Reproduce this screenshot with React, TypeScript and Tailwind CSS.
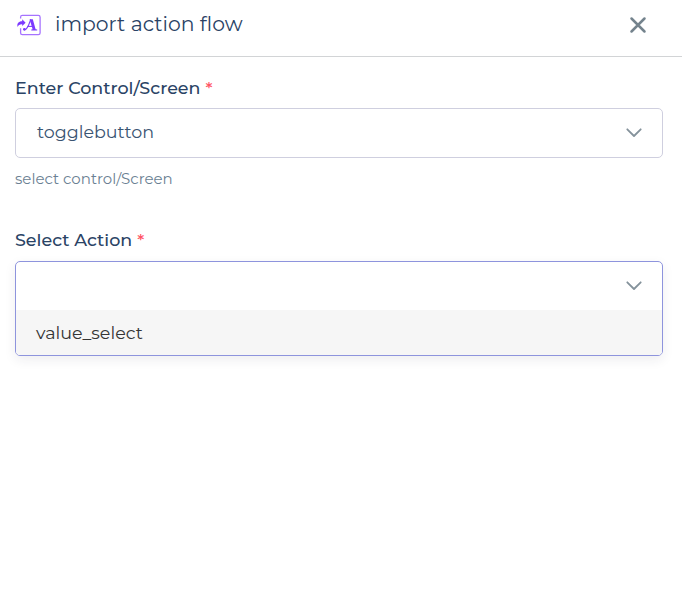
import { useState } from "react";

function ImportIcon() {
  return (
    <svg width="26" height="24" viewBox="0 0 26 24" fill="none" className="mt-px shrink-0">
      <path d="M4.6 4.4V3.2Q4.6 1.4 6.4 1.4H22.3Q24.1 1.4 24.1 3.2V18.9Q24.1 20.7 22.3 20.7H6.4Q4.6 20.7 4.6 18.9V14.2" stroke="#a673ff" strokeWidth="1.3" />
      <path d="M1.7 13C.5 9.7 2.4 7.2 6.2 7.2V5.2L9.6 8.7L6.2 12V10.3C3.8 10.2 2.3 11 1.7 13Z" fill="#7c3aff" />
      <path d="M14.6 5.8C13 10.2 11.4 16 8.4 15.8" stroke="#7c3aff" strokeWidth="1.1" strokeLinecap="round" />
      <path d="M13.6 5.2H16.8L19.6 15.2L21.2 15.6V16.5H15.3V15.6L16.6 15.2Z" fill="#7c3aff" />
      <path d="M11.4 12.4H17.3" stroke="#7c3aff" strokeWidth="1.1" />
      <circle cx="8.4" cy="15.3" r="1.4" fill="#7c3aff" />
    </svg>
  );
}

function Chevron() {
  return (
    <svg width="16" height="10" viewBox="0 0 16 10" fill="none" className="shrink-0">
      <path d="M1.3 1.3L8 8L14.7 1.3" stroke="#84929b" strokeWidth="1.8" strokeLinecap="round" strokeLinejoin="round" />
    </svg>
  );
}

function Label({ text }: { text: string }) {
  return (
    <div className="flex h-6 items-center gap-[5px] whitespace-nowrap text-[17.5px] font-medium leading-6 text-[#2a4365]">
      <span>{text}</span>
      <span className="text-[#ff5263]">*</span>
    </div>
  );
}

export default function App() {
  const [open, setOpen] = useState(true);
  return (
    <div className="h-[603px] w-full overflow-hidden bg-white font-['Montserrat','Inter',sans-serif]">
      <header className="flex h-[57px] items-start border-b border-[#d2d4d6] pl-4 pr-[35px] pt-[13px]">
        <ImportIcon />
        <h1 className="ml-[13px] -mt-[4px] whitespace-nowrap text-[20.35px] leading-[30px] text-[#2a4365]">import action flow</h1>
        <button className="ml-auto mt-[3px]" aria-label="Close">
          <svg width="18" height="18" viewBox="0 0 18 18" fill="none">
            <path d="M2.5 2.5L15.5 15.5M15.5 2.5L2.5 15.5" stroke="#74838d" strokeWidth="2.5" strokeLinecap="round" />
          </svg>
        </button>
      </header>
      <main className="pl-[15px] pr-[19px] pt-[19px]">
        <Label text="Enter Control/Screen" />
        <div className="mt-2 flex h-[50px] items-center justify-between rounded-[5px] border border-[#cfcfdf] pl-[21px] pr-5 text-[17.5px] text-[#3a5472]">
          <span className="pb-[2px]">togglebutton</span>
          <Chevron />
        </div>
        <p className="mt-[9px] h-6 text-[15px] leading-6 text-[#6b7f93]">select control/Screen</p>
        <div className="mt-[37px]">
          <Label text="Select Action" />
        </div>
        <div className="mt-[9px] overflow-hidden rounded-[5px] border border-[#8e94dd] bg-white shadow-[0_4px_12px_rgba(40,40,60,0.08)]">
          <button aria-label="Select Action" onClick={() => setOpen(!open)} className="flex h-[48px] w-full items-center justify-end pr-5">
            <Chevron />
          </button>
          {open && (
            <div className="flex h-[45px] items-center bg-[#f6f6f6] pl-5 pt-px text-[17.5px] text-[#353535]">value_select</div>
          )}
        </div>
      </main>
    </div>
  );
}
